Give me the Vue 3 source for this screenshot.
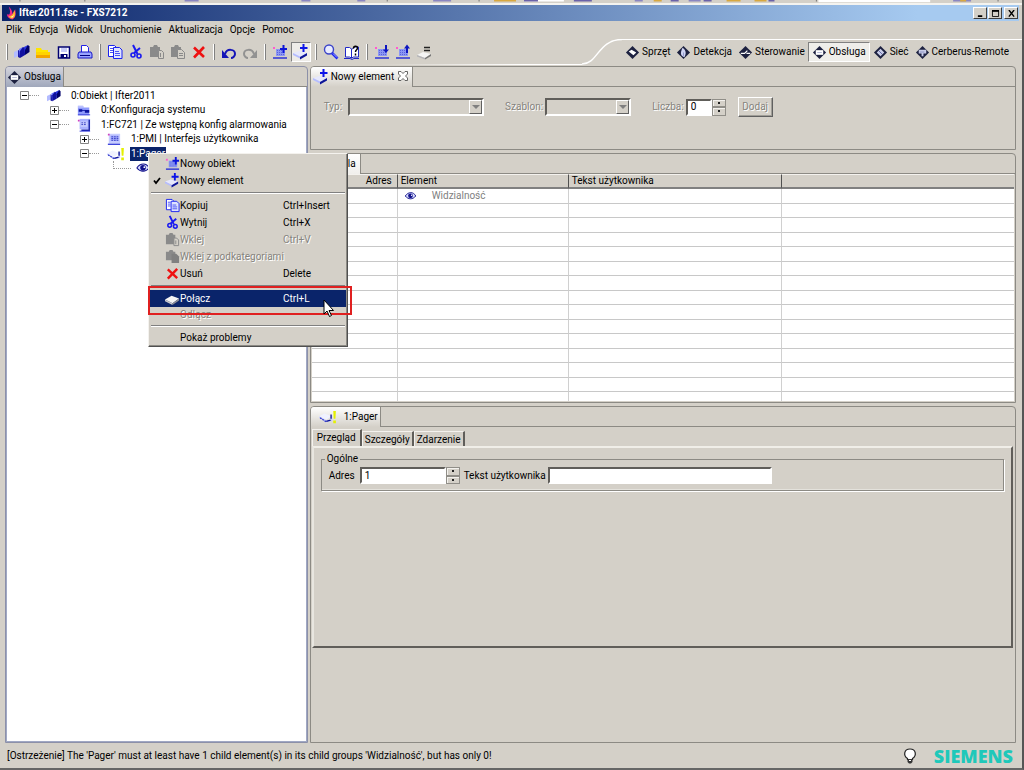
<script setup>
import { ref } from 'vue'

const menus = ['Plik', 'Edycja', 'Widok', 'Uruchomienie', 'Aktualizacja', 'Opcje', 'Pomoc']

const toolGroups = [
  [['site', 'Nowy'], ['folder', 'Otwórz'], ['floppy', 'Zapisz'], ['printer', 'Drukuj']],
  [['copy', 'Kopiuj'], ['cut', 'Wytnij'], ['paste', 'Wklej'], ['paste-doc', 'Wklej z podkategoriami'], ['delete', 'Usuń']],
  [['undo', 'Cofnij'], ['redo', 'Ponów']],
  [['chip-plus', 'Nowy obiekt'], ['plate-plus', 'Nowy element', true]],
  [['search', 'Szukaj'], ['help', 'Pomoc']],
  [['chip-down', 'Import'], ['chip-up', 'Eksport'], ['plate-eq', 'Porównaj']],
]

const perspectives = [
  { icon: 'p-hardware', label: 'Sprzęt' },
  { icon: 'p-detect', label: 'Detekcja' },
  { icon: 'p-control', label: 'Sterowanie' },
  { icon: 'p-operate', label: 'Obsługa', active: true },
  { icon: 'p-net', label: 'Sieć' },
  { icon: 'p-remote', label: 'Cerberus-Remote' },
]

const tree = [
  { depth: 0, toggle: '-', icon: 'site', label: '0:Obiekt | Ifter2011' },
  { depth: 1, toggle: '+', icon: 'config', label: '0:Konfiguracja systemu' },
  { depth: 1, toggle: '-', icon: 'station', label: '1:FC721 | Ze wstępną konfig alarmowania' },
  { depth: 2, toggle: '+', icon: 'pmi', label: '1:PMI | Interfejs użytkownika' },
  { depth: 2, toggle: '-', icon: 'pager', label: '1:Pager', selected: true },
  { depth: 3, icon: 'eye', label: '' },
]

const menuItems = [
  { icon: 'chip-plus', label: 'Nowy obiekt' },
  { icon: 'plate-plus', label: 'Nowy element', checked: true },
  { separator: true },
  { icon: 'copy', label: 'Kopiuj', keys: 'Ctrl+Insert' },
  { icon: 'cut', label: 'Wytnij', keys: 'Ctrl+X' },
  { icon: 'paste', label: 'Wklej', keys: 'Ctrl+V', disabled: true },
  { icon: 'paste-sub', label: 'Wklej z podkategoriami', disabled: true },
  { icon: 'delete', label: 'Usuń', keys: 'Delete' },
  { separator: true },
  { icon: 'plate', label: 'Połącz', keys: 'Ctrl+L', active: true },
  { label: 'Odłącz', disabled: true, short: true },
  { separator: true },
  { label: 'Pokaż problemy', short: true },
]

const emptyRows = 13
const count = ref('0')
const address = ref('1')
const userText = ref('')
</script>

<template>
  <svg class="sprite" aria-hidden="true">
    <symbol id="site" viewBox="0 0 16 16">
      <path d="M0 8l4-2v6l-4 2z" fill="#b4bcff" /><path d="M4 6l2 1v7l-2-1z" fill="#1a1aa8" />
      <path d="M5 5l4-2v7l-3 3z" fill="#6a76ff" /><path d="M9 3l2 1v7l-5 3V7z" fill="#1010a0" />
      <path d="M10 3l4-2v7l-3 2z" fill="#2a34e0" /><path d="M14 1l1.500 1.500V8L11 11V6z" fill="#00006a" />
    </symbol>
    <symbol id="folder" viewBox="0 0 16 16">
      <path d="M1 4h5l1 2h6v3H1z" fill="#ffe600" /><path d="M1 8h14v6H1z" fill="#ffd400" /><path d="M1 11h14v3H1z" fill="#f2a500" />
    </symbol>
    <symbol id="floppy" viewBox="0 0 16 16">
      <path d="M2.500 3h11v11h-11z" fill="#fff" stroke="#000070" stroke-width="1.500" />
      <path d="M5 4h6v4H5z" fill="#c8ccf8" /><path d="M4.500 10h7v4h-7z" fill="#000070" /><path d="M8 11h2v2H8z" fill="#fff" />
    </symbol>
    <symbol id="printer" viewBox="0 0 16 16">
      <path d="M4.500 8V1.500h5l2 2V8" fill="#fff" stroke="#2222e8" /><path d="M2 8h12l1 2v4H1v-4z" fill="#9aa4ff" stroke="#1818c8" />
      <path d="M3 11.500h10" stroke="#000080" />
    </symbol>
    <symbol id="copy" viewBox="0 0 16 16">
      <path d="M1.500 1.500h6l2 2v9h-8z" fill="#fff" stroke="#1a22f0" /><path d="M6.500 3.500h6l2.500 2.500v8.500H6.500z" fill="#dfe3ff" stroke="#1a22f0" />
      <path d="M8 7.500h4M8 9.500h5M8 11.500h5M3 4.500h3M3 6.500h3M3 8.500h3" stroke="#4a52f4" />
    </symbol>
    <symbol id="cut" viewBox="0 0 16 16">
      <path d="M5 1l4.500 9M12 4L6 9" stroke="#1a1af0" stroke-width="2" fill="none" />
      <circle cx="5" cy="11" r="2" fill="none" stroke="#1a1af0" stroke-width="1.600" /><circle cx="11" cy="12" r="2" fill="none" stroke="#1a1af0" stroke-width="1.600" />
    </symbol>
    <symbol id="paste" viewBox="0 0 16 16">
      <path d="M1 3h3l1-2h3l1 2h2v10H1z" fill="#8a8a8a" /><path d="M9.500 6.500h3l2 2v6h-5z" fill="#d4d0c8" stroke="#8a8a8a" /><path d="M11.500 9v4" stroke="#8a8a8a" />
    </symbol>
    <symbol id="paste-sub" viewBox="0 0 16 16">
      <path d="M1 3h3l1-2h3l1 2h2v9H1z" fill="#8a8a8a" /><path d="M7 5h5l3 3v7H7z" fill="#808080" />
    </symbol>
    <symbol id="paste-doc" viewBox="0 0 16 16">
      <path d="M1 3h3l1-2h3l1 2h2v10H1z" fill="#8a8a8a" /><path d="M7.500 5.500h4l3 3v6h-7z" fill="#d4d0c8" stroke="#8a8a8a" /><path d="M9 9.500h4M9 11.500h4" stroke="#8a8a8a" />
    </symbol>
    <symbol id="delete" viewBox="0 0 16 16">
      <path d="M3 3.500l10 9.500M13 3L3 13.500" stroke="#ee1111" stroke-width="2.600" />
    </symbol>
    <symbol id="undo" viewBox="0 0 16 16">
      <path d="M4 10c2-6 10-5 10 0 0 2-2 4-4 4" fill="none" stroke="#1414b8" stroke-width="2" /><path d="M1 6v8h7z" fill="#1414b8" />
    </symbol>
    <symbol id="redo" viewBox="0 0 16 16">
      <path d="M12 10C10 4 2 5 2 10c0 2 2 4 4 4" fill="none" stroke="#929292" stroke-width="2" /><path d="M15 6v8H8z" fill="#929292" />
    </symbol>
    <symbol id="chip" viewBox="0 0 16 16">
      <path d="M1 3h2v2H1z" fill="#ff5ad0" /><path d="M4 5h9v7H4z" fill="#8c96f4" /><path d="M5 6.500h7M5 8.500h7M5 10.500h7" stroke="#5a64dc" stroke-dasharray="1 1" />
      <path d="M1 14h14" stroke="#2028d8" stroke-width="1.400" />
    </symbol>
    <symbol id="chip-plus" viewBox="0 0 16 16">
      <use href="#chip" /><path d="M11.500 1v8M8 5h7" stroke="#0c14d8" stroke-width="2" />
    </symbol>
    <symbol id="chip-down" viewBox="0 0 16 16">
      <use href="#chip" /><path d="M12 1v7" stroke="#0c14c0" stroke-width="2" /><path d="M9 5.500h6L12 9z" fill="#0c14c0" />
    </symbol>
    <symbol id="chip-up" viewBox="0 0 16 16">
      <use href="#chip" /><path d="M12 3v6" stroke="#0c14c0" stroke-width="2" /><path d="M9 4.500h6L12 .5z" fill="#0c14c0" />
    </symbol>
    <symbol id="plate-plus" viewBox="0 0 16 16">
      <path d="M0 9l6-2 8 2-6 4z" fill="#e6e8fc" /><path d="M0 9l8 4v2l-8-4z" fill="#b4bcff" /><path d="M7 13l7-4v2.500L7 15.500z" fill="#0c1498" />
      <path d="M10.500 0v8M7 4h7.500" stroke="#0c14e8" stroke-width="2" />
    </symbol>
    <symbol id="plate" viewBox="0 0 16 16">
      <path d="M0 9l7-4 8 3-7 5z" fill="#f4f4f4" /><path d="M0 9l8 4v2l-8-4z" fill="#c8c8cc" /><path d="M8 13l7-5v2l-7 5z" fill="#8e8e96" />
    </symbol>
    <symbol id="plate-eq" viewBox="0 0 16 16">
      <path d="M1 11l6-3 8 2-6 4z" fill="#f4f4f4" /><path d="M1 11l8 3v1.500L1 12.500z" fill="#b4b4b8" /><path d="M9 14l6-4v2l-6 3.500z" fill="#777" />
      <path d="M8 3.500h6M8 6.500h6" stroke="#222" stroke-width="1.600" />
    </symbol>
    <symbol id="search" viewBox="0 0 16 16">
      <circle cx="6" cy="5.500" r="4.500" fill="#e8ebff" stroke="#3c44c8" stroke-width="1.400" /><path d="M9 9l5.500 5.500" stroke="#1a22f0" stroke-width="2.600" /><path d="M10 9.500l4 4" stroke="#c8ccff" stroke-width=".8" />
    </symbol>
    <symbol id="help" viewBox="0 0 16 16">
      <path d="M1.500 3.500h4l2 1.500v9l-2-1h-4z" fill="#fff" stroke="#2028c8" /><path d="M7.500 5h1l2-2h4v10h-5l-2 1z" fill="#fff" stroke="#2028c8" />
      <path d="M0 14.500h6l2 1 2-1h5" stroke="#2028c8" fill="none" /><path d="M9.500 4.500c0-3 4-3 4-.5 0 2-2 1.500-2 4M11.500 9.500v2" stroke="#000" stroke-width="1.500" fill="none" />
    </symbol>
    <symbol id="config" viewBox="0 0 16 16">
      <path d="M1 3h6l1 2h6v9H1z" fill="#8f9afc" /><path d="M2 7h4v3H2zM9 8h5v3H9z" fill="#0c14a0" /><path d="M4 8.500h6" stroke="#0c14a0" /><path d="M1 4.500h7" stroke="#e6e9ff" /><path d="M1 13.500h14" stroke="#3038d8" />
    </symbol>
    <symbol id="station" viewBox="0 0 16 16">
      <path d="M3 1h12v12H3z" fill="#aab2ff" /><path d="M14 2v12H5" fill="none" stroke="#1c24a8" stroke-width="1.600" /><path d="M4 4h8v6H4z" fill="#c8ceff" />
      <path d="M5 5.500h6M5 7.500h6" stroke="#3038c0" stroke-dasharray="2 1" /><path d="M1 2h2v2H1z" fill="#d040c0" /><path d="M3 15h12" stroke="#2028d8" />
    </symbol>
    <symbol id="pmi" viewBox="0 0 16 16">
      <path d="M2 2h13v11H2z" fill="#c6ccff" /><path d="M1 2h2v2H1z" fill="#d040c0" /><path d="M4 4h9v6H4z" fill="#a2aafc" />
      <path d="M5 5.500h8M5 7.500h8M5 9.500h8" stroke="#3038c0" stroke-dasharray="2 1" /><path d="M1 14h14" stroke="#2028d8" stroke-width="1.400" />
    </symbol>
    <symbol id="pager" viewBox="0 0 20 16">
      <path d="M0 7l6-3 8 3-6 4z" fill="#f0f2ff" /><path d="M0 8l8 5M8 13l6-1V6" fill="none" stroke="#c0c6ff" stroke-width="1.500" />
      <path d="M1 9l7 4.500" stroke="#3038c8" stroke-width="1.500" stroke-dasharray="2 1" /><path d="M8 13l5-1.500M13.500 5v5" stroke="#0c1498" stroke-width="1.500" />
      <path d="M16 1h3l-.5 9h-2zM16 12h3v3h-3z" fill="#e4f000" />
    </symbol>
    <symbol id="eye" viewBox="0 0 16 16">
      <path d="M1 8c4-6 11-6 14 0-4 5-10 5-14 0z" fill="#d8dcff" stroke="#10108a" stroke-width="1.200" /><circle cx="8" cy="7.800" r="3.200" fill="#10108a" /><circle cx="9.500" cy="7" r="1" fill="#fff" />
    </symbol>
    <symbol id="diamond" viewBox="0 0 16 16"><path d="M8 1l7 7-7 7-7-7z" fill="#1d2140" /></symbol>
    <symbol id="p-hardware" viewBox="0 0 16 16"><use href="#diamond" /><path d="M4 7l3-2 5 3-3 3z" fill="#fff" /></symbol>
    <symbol id="p-detect" viewBox="0 0 16 16"><use href="#diamond" /><path d="M7 3c4 3 4 6 2 10-4-1-5-4-2-10z" fill="#cfd4f4" /><path d="M8 8v4" stroke="#9098cc" /></symbol>
    <symbol id="p-control" viewBox="0 0 16 16"><use href="#diamond" /><path d="M3 9h4l3-3M9 9h4" stroke="#fff" stroke-width="1.300" fill="none" /></symbol>
    <symbol id="p-operate" viewBox="0 0 16 16"><use href="#diamond" /><path d="M4 5.500h8v5H4z" fill="#fff" /><path d="M5.500 8h5" stroke="#b4b8d4" /></symbol>
    <symbol id="p-net" viewBox="0 0 16 16"><use href="#diamond" /><path d="M8 4l4 4-4 4-4-4z" fill="#c8cce8" /><path d="M6.500 6.500l3 3" stroke="#5a60a0" /></symbol>
    <symbol id="p-remote" viewBox="0 0 16 16"><use href="#diamond" /><path d="M4 5h8v4H9v3H7V9H4z" fill="#c8cce8" /><path d="M5 7.500h5" stroke="#8a90c0" /></symbol>
  </svg>

  <div class="window">
    <svg class="backdrop" viewBox="0 0 1024 4" preserveAspectRatio="none" aria-hidden="true">
      <path d="M820 0h112v3H820zM525 0h40v2h-40z" fill="#fff" />
      <path d="M20 0v2M85 0v2M388 0v2M480 0v2M818 0v2M1000 0v2" stroke="#666" />
      <path d="M185 1h14M302 1h9M358 1h8M434 1h18M636 1h8M690 1h12M955 1h18" stroke="#8a86c0" stroke-width="2" />
      <path d="M495 1h22M655 1h8M728 1h14M756 1h12M962 1h6" stroke="#d8a840" stroke-width="2" />
      <path d="M525 1h14M575 1h18M672 1h8M705 1h8M770 1h6" stroke="#6a62a8" stroke-width="2" />
    </svg>

    <header class="titlebar">
      <svg class="flame" viewBox="0 0 12 14" aria-hidden="true">
        <path d="M3 0c3 3 4 5 4 8l3-5c1 5 1 9-3 11-4-1-6-3-6-6 1 1 2 1 3 0C5 5 4 3 3 0z" fill="#f0288c" />
        <path d="M9 4c2 4 1 8-2 9-3 0-4-2-4-3 3 1 5-2 6-6z" fill="#ffb020" /><path d="M8 8c1 3-1 4-2 4l-1-1c2 0 3-1 3-3z" fill="#fff6c0" />
      </svg>
      <h1>Ifter2011.fsc - FXS7212</h1>
      <div class="controls">
        <button aria-label="Minimalizuj"><svg viewBox="0 0 10 8"><path d="M2 7h5" stroke="#000" stroke-width="2" /></svg></button>
        <button aria-label="Maksymalizuj"><svg viewBox="0 0 10 8"><path d="M1.500 1v6.500h7V1M1 1h8" fill="none" stroke="#000" /><path d="M1 1h8" stroke="#000" stroke-width="2" /></svg></button>
        <button class="close" aria-label="Zamknij"><svg viewBox="0 0 10 8"><path d="M2 0l6 7.500M8 0L2 7.500" stroke="#000" stroke-width="1.600" /></svg></button>
      </div>
    </header>

    <nav class="menubar">
      <button v-for="m in menus" :key="m">{{ m }}</button>
    </nav>

    <div class="toolbar">
      <div class="tools">
        <div v-for="(g, i) in toolGroups" :key="i" class="tool-group">
          <button v-for="[icon, label, pressed] in g" :key="label" :class="{ pressed }" :aria-label="label">
            <svg class="ico"><use :href="'#' + icon" /></svg>
          </button>
        </div>
      </div>
      <svg class="curve" viewBox="0 0 40 26" aria-hidden="true"><path d="M0 25C16 25 16 .5 40 .5" fill="none" stroke="#fff" stroke-width="1.500" /></svg>
      <div class="perspectives">
        <button v-for="p in perspectives" :key="p.label" :class="{ active: p.active }">
          <svg class="dia"><use :href="'#' + p.icon" /></svg><span>{{ p.label }}</span>
        </button>
      </div>
    </div>

    <main class="workspace">
      <section class="panel tree-panel">
        <div class="tabs">
          <button class="tab blue"><svg class="dia"><use href="#p-operate" /></svg><span>Obsługa</span></button>
        </div>
        <ul class="tree">
          <li v-for="(n, i) in tree" :key="i" :class="['depth-' + n.depth, { leaf: !n.toggle }]">
            <button v-if="n.toggle" class="toggle" :aria-label="n.toggle === '+' ? 'Rozwiń' : 'Zwiń'">
              <svg viewBox="0 0 9 9"><path d="M.5.5h8v8h-8z" fill="#fff" stroke="#848484" /><path d="M2 4.500h5" stroke="#000" /><path v-if="n.toggle === '+'" d="M4.500 2v5" stroke="#000" /></svg>
            </button>
            <span class="dash"></span>
            <svg class="node-icon" :class="{ wide: n.icon === 'pager' }"><use :href="'#' + n.icon" /></svg>
            <span v-if="n.label" class="node-label" :class="{ selected: n.selected }">{{ n.label }}</span>
          </li>
        </ul>
      </section>

      <div class="editors">
        <section class="panel">
          <div class="tabs">
            <button class="tab light"><svg class="ico"><use href="#plate-plus" /></svg><span>Nowy element</span>
              <svg class="x" viewBox="0 0 10 10"><path d="M.5.5h2.500L5 2.500 7 .5h2.500V3l-2 2 2 2v2.500H7l-2-2-2 2H.5V7l2-2-2-2z" fill="#fff" stroke="#555" stroke-width=".9" /></svg>
            </button>
          </div>
          <form class="new-form" @submit.prevent>
            <label class="off" for="typ">Typ:</label>
            <span class="combo typ"><select id="typ" disabled></select><i></i></span>
            <label class="off" for="szablon">Szablon:</label>
            <span class="combo szablon"><select id="szablon" disabled></select><i></i></span>
            <label class="off" for="liczba">Liczba:</label>
            <span class="spin liczba"><input id="liczba" v-model="count"><span class="arrows"><button type="button" aria-label="Więcej"></button><button type="button" aria-label="Mniej"></button></span></span>
            <button class="add off" disabled>Dodaj</button>
          </form>
        </section>

        <section class="panel">
          <div class="tabs"><button class="tab light table-tab">Tabela</button></div>
          <div class="grid-wrap">
            <table>
              <colgroup><col class="c1"><col class="c2"><col class="c3"><col></colgroup>
              <thead><tr><th class="num">Adres</th><th>Element</th><th>Tekst użytkownika</th><th></th></tr></thead>
              <tbody>
                <tr><td></td><td><div class="cell"><svg class="ico"><use href="#eye" /></svg><span>Widzialność</span></div></td><td></td><td></td></tr>
                <tr v-for="r in emptyRows" :key="r"><td></td><td></td><td></td><td></td></tr>
                <tr class="rest"><td></td><td></td><td></td><td></td></tr>
              </tbody>
            </table>
          </div>
        </section>

        <section class="panel detail">
          <div class="tabs"><button class="tab light pager"><svg class="node-icon wide"><use href="#pager" /></svg><span>1:Pager</span></button></div>
          <div class="subtabs">
            <button class="on">Przegląd</button><button>Szczegóły</button><button>Zdarzenie</button>
          </div>
          <div class="sheet">
            <fieldset>
              <legend>Ogólne</legend>
              <div class="fields">
                <label for="adres">Adres</label>
                <span class="spin adres"><input id="adres" v-model="address"><span class="arrows"><button aria-label="Więcej"></button><button aria-label="Mniej"></button></span></span>
                <label for="tekst">Tekst użytkownika</label>
                <input id="tekst" v-model="userText" class="text">
              </div>
            </fieldset>
          </div>
        </section>
      </div>
    </main>

    <footer class="status">
      <span>[Ostrzeżenie] The 'Pager' must at least have 1 child element(s) in its child groups 'Widzialność', but has only 0!</span>
      <svg class="bulb" viewBox="0 0 14 16" aria-hidden="true">
        <path d="M4.500 10.500C0 7.500 1 1 7 1s7 6.500 2.500 9.500v1h-5z" fill="#fff" stroke="#222" stroke-width="1.200" /><path d="M4.500 11h5v3l-1.500 1.500H6L4.500 14z" fill="#333" /><path d="M6 12.500h2" stroke="#fff" />
      </svg>
      <strong>SIEMENS</strong>
    </footer>

    <div class="context" role="menu">
      <template v-for="(m, i) in menuItems" :key="i">
        <hr v-if="m.separator">
        <button v-else role="menuitem" :class="{ off: m.disabled, active: m.active, short: m.short }">
          <svg class="check" viewBox="0 0 8 8"><path v-if="m.checked" d="M1 3.500l2 2.500 4-5" fill="none" stroke="#000" stroke-width="1.800" /></svg>
          <svg class="ico"><use v-if="m.icon" :href="'#' + m.icon" /></svg>
          <span class="name">{{ m.label }}</span><span class="keys">{{ m.keys }}</span>
        </button>
      </template>
      <div class="highlight"></div>
      <svg class="pointer" viewBox="0 0 12 19" aria-hidden="true"><path d="M1 1v14l3-3 2.500 5.500 2-1L6 11.500h4.500z" fill="#fff" stroke="#000" /></svg>
    </div>
  </div>
</template>

<style>
html, body { background: #d4d0c8; }
</style>

<style scoped>
*, *::before, *::after { box-sizing: border-box; }
.sprite { position: absolute; width: 0; height: 0; }
.window {
  position: relative; min-height: 100vh; display: flex; flex-direction: column; background: #d4d0c8; color: #000;
  font: 10px/14px Roboto, "Liberation Sans", sans-serif;
  border-right: 2px solid #555; border-bottom: 2px solid #666; white-space: nowrap;
}
button, input, select { font: inherit; color: inherit; margin: 0; padding: 0; border: 0; background: none; border-radius: 0; outline: 0; }
svg { display: block; flex: none; }
.ico { width: 16px; height: 16px; }
.dia { width: 15px; height: 15px; }
.backdrop { width: 100%; height: 5px; border-bottom: 2px solid #f4f3ef; }

.titlebar { display: flex; align-items: center; height: 16px; margin: 0 3px 0 2px; padding: 0 1px 0 4px; background: linear-gradient(90deg, #0a246a, #a6caf0 90%); color: #fff; }
.flame { width: 11px; height: 14px; }
h1 { flex: 1; margin: 0 0 0 2px; font-size: 10px; line-height: 16px; }
.controls { display: flex; gap: 1px; }
.controls button { width: 14px; height: 12px; padding: 1px 2px; background: #d4d0c8; border: 1px solid; border-color: #fff #404040 #404040 #fff; }
.controls svg { width: 9px; height: 7px; }
.controls .close { margin-left: 1px; }

.menubar { display: flex; gap: 7px; height: 18px; padding: 0 6px; }

.toolbar { display: flex; height: 26px; }
.tools { display: flex; align-items: center; flex: 1; padding-left: 2px; border-bottom: 1px solid; border-image: linear-gradient(90deg, transparent 65%, #fff 90%) 1; }
.tool-group { display: flex; gap: 1px; }
.tool-group::before { content: ""; width: 2px; height: 16px; margin: 2px 3px 2px 4px; background: #fff; border-right: 1px solid #808080; }
.tool-group button { width: 20px; height: 20px; padding: 2px; }
.tool-group .pressed { background: #eeece8; border: 1px solid; border-color: #808080 #fff #fff #808080; padding: 1px; }
.curve { width: 40px; height: 26px; }
.perspectives { display: flex; align-items: center; padding: 1px 10px 2px 0; border-top: 1px solid #fff; }
.perspectives button { display: flex; align-items: center; gap: 2px; height: 20px; padding: 0 3px; }
.perspectives .active { background: #efeeea; border: 1px solid; border-color: #808080 #fff #fff #808080; }

.workspace { flex: 1; display: grid; grid-template-columns: 3fr 7fr; gap: 2px; padding: 1px 6px 0 5px; }
.editors { display: flex; flex-direction: column; gap: 3px; min-width: 0; }
.panel { border: 1px solid #8c8a84; border-radius: 4px 4px 0 0; min-width: 0; }
.tabs { display: flex; height: 20px; border-bottom: 1px solid #8c8a84; }
.tab { display: flex; align-items: center; gap: 2px; padding: 0 4px 0 2px; margin-bottom: -1px; border-right: 1px solid #8c8a84; border-radius: 3px 0 0 0; }
.tab.blue { background: linear-gradient(#d4d4dc, #a0a8bc); padding: 0 2px 0 1px; }
.tab.light { background: linear-gradient(#fff, #d4d0c8); }
.tab .x { width: 10px; height: 10px; margin: 0 0 2px 2px; }
.tab.table-tab { width: 50px; padding: 0 4px; justify-content: flex-end; background: linear-gradient(#fff, #f0efec); }
.tab.pager { padding: 0 2px 0 7px; gap: 2px; }

.tree-panel { display: flex; flex-direction: column; border-color: #8c90a8; }
.tree { flex: 1; margin: 0; padding: 1px 0; list-style: none; background: #fff; border: 1px solid #a0a8c4; border-top: 0; }
.tree li { display: flex; align-items: center; height: 15px; }
.tree li:nth-child(even) { height: 14px; }
.depth-0 { padding-left: 13px; }
.depth-1 { padding-left: 43px; }
.depth-2 { padding-left: 73px; }
.depth-3 { padding-left: 106px; }
.toggle { width: 9px; height: 9px; }
.toggle svg { width: 9px; height: 9px; }
.dash { flex: none; width: 10px; height: 1px; margin-right: 7px; border-top: 1px dotted #999; }
.leaf .dash { width: 18px; height: 8px; margin: 0 4px 7px 0; border-top: 0; border-left: 1px dotted #999; border-bottom: 1px dotted #999; }
.node-icon { width: 16px; height: 14px; margin-right: 8px; }
.node-icon.wide { width: 20px; margin-right: 4px; }
.leaf .node-icon { margin: 0; }
.node-label { flex: none; padding: 0 1px; line-height: 14px; }
.node-label.selected { background: #0a246a; color: #fff; }

.off, .off span { color: #85837d; text-shadow: 1px 1px #fff; }
.new-form { display: flex; align-items: center; height: 62px; padding: 0 0 22px 13px; }
.combo { position: relative; display: flex; height: 18px; margin: 0 21px 0 6px; }
.combo select { flex: 1; appearance: none; background: #d4d0c8; border: 2px solid; border-color: #605e5a #fff #fff #605e5a; opacity: 1; }
.combo i { position: absolute; top: 2px; right: 2px; bottom: 2px; width: 13px; border: 1px solid; border-color: #fff #606060 #606060 #fff; background: #d4d0c8; }
.combo i::after { content: ""; position: absolute; left: 2px; top: 4px; border: 4px solid transparent; border-top-color: #808080; border-bottom: 0; }
.typ { width: 136px; }
.szablon { width: 86px; margin-left: 2px; }
.spin { display: flex; height: 17px; }
.spin input { flex: 1; min-width: 0; }
input { padding: 0 3px; background: #fff; border: 2px solid; border-color: #605e5a #fff #fff #605e5a; }
.arrows { display: flex; flex-direction: column; width: 14px; }
.arrows button { flex: 1; border: 1px solid #908e88; box-shadow: inset 1px 1px #f4f2ee; display: grid; place-items: center; }
.arrows button::after { content: ""; width: 2px; height: 2px; background: #222; }
.liczba { width: 40px; margin: 0 12px 0 2px; }
.add { width: 35px; height: 20px; border: 1px solid; border-color: #fff #606060 #606060 #fff; box-shadow: inset -1px -1px #a09e98; }

.grid-wrap { padding: 0 1px 1px; }
table { width: 100%; table-layout: fixed; border-collapse: separate; border-spacing: 0; background: #fff; }
.c1 { width: 86px; }
.c2 { width: 171px; }
.c3 { width: 213px; }
th { height: 15px; padding: 0 0 0 3px; background: #d4d0c8; border-top: 1px solid #f4f2ee; border-right: 1px solid #505050; border-bottom: 2px solid #808080; text-align: left; font-weight: normal; line-height: 12px; }
th.num { text-align: right; padding-right: 5px; }
td { height: 15px; padding: 0; border-right: 1px solid #d0d0d0; border-bottom: 1px solid #c8c8c8; }
tr:nth-child(even) td { height: 14px; }
tbody .rest td { height: 9px; border-bottom: 0; }
th:last-child, td:last-child { border-right: 0; }
.cell { display: flex; align-items: center; height: 13px; padding-left: 5px; gap: 14px; color: #808080; }
.cell .ico { width: 15px; height: 12px; }

.detail { flex: 1; }
.subtabs { display: flex; align-items: flex-end; height: 19px; padding: 2px 0 0 1px; }
.subtabs button { height: 15px; padding: 0 2px; border-top: 1px solid #f4f2ee; border-right: 2px solid #605e5a; border-left: 1px solid #f4f2ee; line-height: 13px; }
.subtabs .on { height: 17px; padding: 0 4px 2px; }
.sheet { min-height: 202px; margin: 0 2px 0 1px; padding: 6px 7px; border: 2px solid; border-color: #f0eee8 #605e5a #605e5a #e8e6e0; }
fieldset { margin: 0; padding: 3px 7px 6px 7px; border: 1px solid #8c8a84; box-shadow: 1px 1px #fff, inset 0 -1px #e4e2dc; }
legend { padding: 0 2px; margin-left: -4px; height: 10px; line-height: 10px; }
.fields { display: flex; align-items: center; }
.fields .text { width: 224px; height: 17px; margin-left: 2px; }
.adres { width: 100px; margin: 0 4px 0 5px; }

.status { display: flex; align-items: center; height: 25px; padding: 0 9px 0 7px; }
.status > span { flex: 1; }
.bulb { width: 14px; height: 16px; margin-right: 17px; }
strong { color: #1fc8ba; font: 800 18px/20px "Open Sans", "Noto Sans", sans-serif; }

.context { position: absolute; left: 148px; top: 153px; width: 200px; padding: 1px; background: #d4d0c8; border: 1px solid; border-color: #f4f2ee #505050 #505050 #f4f2ee; box-shadow: inset -1px -1px #8c8a84; }
.context button { display: flex; align-items: center; width: 100%; height: 17px; padding-left: 3px; text-align: left; }
.context button.short { height: 15px; }
.context button.active { background: #0a246a; color: #fff; }
.context .check { width: 8px; height: 8px; margin-right: 4px; }
.context .name { width: 103px; }
.context .ico { width: 15px; height: 15px; }
.context hr { height: 2px; margin: 3px 1px; border: 0; border-top: 1px solid #808080; border-bottom: 1px solid #fff; }
.highlight { position: absolute; left: -1px; top: 132px; width: 204px; height: 29px; border: 2px solid #e02020; }
.pointer { position: absolute; left: 174px; top: 145px; width: 12px; height: 19px; }
</style>
